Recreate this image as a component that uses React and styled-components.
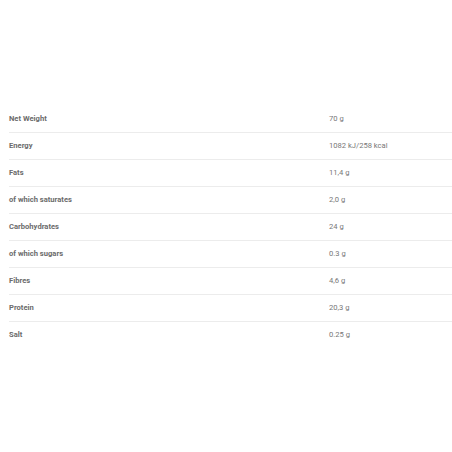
import { createGlobalStyle } from 'styled-components';
import styled from 'styled-components';

const GlobalStyle = createGlobalStyle`
  body {
    margin: 0;
    background: #ffffff;
    font-family: Roboto, 'Liberation Sans', sans-serif;
  }
`;

const Page = styled.div`
  padding: 106px 0 0 9px;
`;

const Table = styled.div`
  display: flex;
  flex-direction: column;
`;

const Row = styled.div`
  display: grid;
  grid-template-columns: 320px 1fr;
  align-items: center;
  height: 27px;
  padding-bottom: 2px;
  box-sizing: border-box;
  border-bottom: ${({ $last }) => ($last ? 'none' : '1px solid #ececec')};
`;

const Label = styled.div`
  font-size: 7.6px;
  font-weight: 700;
  color: #6b6b6b;
`;

const Value = styled.div`
  font-size: 7.6px;
  color: #777777;
`;

const rows = [
  ['Net Weight', '70 g'],
  ['Energy', '1082 kJ/258 kcal'],
  ['Fats', '11,4 g'],
  ['of which saturates', '2,0 g'],
  ['Carbohydrates', '24 g'],
  ['of which sugars', '0.3 g'],
  ['Fibres', '4,6 g'],
  ['Protein', '20,3 g'],
  ['Salt', '0.25 g'],
];

export default function App() {
  return (
    <>
      <GlobalStyle />
      <Page>
        <Table>
          {rows.map(([label, value], i) => (
            <Row key={label} $last={i === rows.length - 1}>
              <Label>{label}</Label>
              <Value>{value}</Value>
            </Row>
          ))}
        </Table>
      </Page>
    </>
  );
}
